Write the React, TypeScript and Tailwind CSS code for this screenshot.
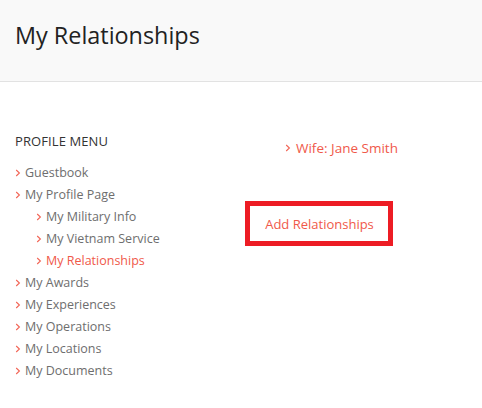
import React from "react";

const font = { fontFamily: '"Open Sans", "Liberation Sans", sans-serif' };

function Chevron() {
    return (
        <svg width="6" height="8" viewBox="0 0 6 8" className="shrink-0">
            <path d="M1.2 1 L4.4 4 L1.2 7" fill="none" stroke="#f26455" strokeWidth="1.1" />
        </svg>
    );
}

const menu = [
    { label: "Guestbook", sub: false },
    { label: "My Profile Page", sub: false },
    { label: "My Military Info", sub: true },
    { label: "My Vietnam Service", sub: true },
    { label: "My Relationships", sub: true, active: true },
    { label: "My Awards", sub: false },
    { label: "My Experiences", sub: false },
    { label: "My Operations", sub: false },
    { label: "My Locations", sub: false },
    { label: "My Documents", sub: false },
];

export default function App() {
    return (
        <div className="w-[482px] h-[408px] bg-white overflow-hidden" style={font}>
            {/* page header */}
            <div className="h-[82px] bg-[#f9f9f9] border-b border-[#e2e2e2] flex items-center px-[15px]">
                <h1 className="text-[23.4px] leading-none text-[#222] mt-[-10px]">My Relationships</h1>
            </div>

            <div className="flex">
                {/* sidebar menu */}
                <div className="w-[245px] pl-[15px] pt-[51px]">
                    <h3 className="text-[13px] leading-4 uppercase text-[#333] tracking-[0.1px]">Profile Menu</h3>
                    <ul className="mt-[13px]">
                        {menu.map((item) => (
                            <li
                                key={item.label}
                                className={
                                    "flex items-center gap-[4px] h-[22px] text-[12.5px] " +
                                    (item.sub ? "pl-[21px] " : "") +
                                    (item.active ? "text-[#f0594a]" : "text-[#6e6e6e]")
                                }
                            >
                                <Chevron />
                                <span>{item.label}</span>
                            </li>
                        ))}
                    </ul>
                </div>

                {/* relationships */}
                <div className="flex-1 pt-[57px]">
                    <div className="flex items-center gap-[5px] pl-[40px] h-[18px] text-[13.5px] text-[#f0594a]">
                        <Chevron />
                        <span>Wife: Jane Smith</span>
                    </div>
                    <div className="mt-[44px] w-[148px] h-[45px] border-[5px] border-[#ed1c24] flex items-center justify-center pt-[3px] pl-[1px] text-[13px] text-[#f0594a]">
                        Add Relationships
                    </div>
                </div>
            </div>
        </div>
    );
}
